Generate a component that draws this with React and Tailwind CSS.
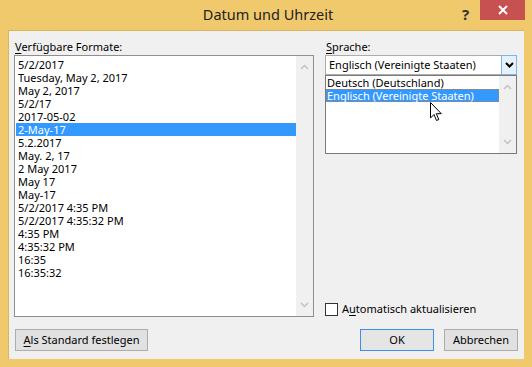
import { useState } from 'react'

const formats = [
  '5/2/2017',
  'Tuesday, May 2, 2017',
  'May 2, 2017',
  '5/2/17',
  '2017-05-02',
  '2-May-17',
  '5.2.2017',
  'May. 2, 17',
  '2 May 2017',
  'May 17',
  'May-17',
  '5/2/2017 4:35 PM',
  '5/2/2017 4:35:32 PM',
  '4:35 PM',
  '4:35:32 PM',
  '16:35',
  '16:35:32',
]

const font = { fontFamily: '"Segoe UI", "Noto Sans", sans-serif' }

function Chevron({ up, color = '#c2c2c2', bold }) {
  return (
    <svg width="9" height="6" viewBox="0 0 9 6">
      <path
        d={up ? 'M1 5 L4.5 1.5 L8 5' : 'M1 1 L4.5 4.5 L8 1'}
        fill="none"
        stroke={color}
        strokeWidth={bold ? 2 : 1.5}
      />
    </svg>
  )
}

function ScrollBar({ className = '' }) {
  return (
    <div className={`flex flex-col justify-between items-center bg-[#f0f0f0] w-[17px] py-[8px] ${className}`}>
      <Chevron up />
      <Chevron />
    </div>
  )
}

function Cursor() {
  return (
    <svg width="13" height="20" viewBox="0 0 13 20" className="absolute left-[104px] top-[26px]">
      <path
        d="M0.5 0.5 L0.5 16 L4 12.5 L6.5 18.5 L8.8 17.5 L6.3 11.7 L11.3 11.7 Z"
        fill="#fff"
        stroke="#000"
        strokeWidth="1"
      />
    </svg>
  )
}

export default function App() {
  const [selected] = useState(5)

  return (
    <div className="w-[532px] h-[367px] bg-[#f1c96d] flex flex-col text-[11px] text-black" style={font}>
      {/* Titelleiste */}
      <div className="relative h-[30px] flex items-center justify-center shrink-0">
        <span className="text-[14.5px] text-[#222] pl-[4px]">Datum und Uhrzeit</span>
        <span className="absolute left-[462px] top-[3px] text-[15px] font-bold text-[#333]">?</span>
        <div className="absolute left-[480px] top-0 w-[45px] h-[20px] bg-[#c75050] flex items-center justify-center">
          <svg width="10" height="10" viewBox="0 0 10 10">
            <path d="M1 1 L9 9 M9 1 L1 9" stroke="#fff" strokeWidth="2" />
          </svg>
        </div>
      </div>

      {/* Inhalt */}
      <div className="flex-1 mx-[8px] mb-[8px] bg-[#f0f0f0] border-t border-l border-[#d9b561] pl-[5px] pr-[6px] pt-[7px] pb-[8px] flex flex-col">
        <div className="flex gap-[11px]">
          <div className="w-[300px] flex flex-col">
            <div className="h-[17px] leading-[17px] pl-[1px]">
              <span className="underline underline-offset-2">V</span>erfügbare Formate:
            </div>
            <div className="h-[262px] border border-[#8f8f8f] bg-white flex">
              <div className="flex-1 pt-[2px] pl-[1px]">
                {formats.map((f, i) => (
                  <div
                    key={f}
                    className={`h-[13px] leading-[13px] pl-[2px] whitespace-nowrap ${
                      i === selected ? 'bg-[#3399ff] text-white' : ''
                    }`}
                  >
                    {f}
                  </div>
                ))}
              </div>
              <ScrollBar />
            </div>
          </div>

          <div className="w-[192px] flex flex-col">
            <div className="h-[17px] leading-[17px] pl-[1px]">
              <span className="underline underline-offset-2">S</span>prache:
            </div>
            <div className="relative">
              <div className="h-[20px] border border-[#acacac] bg-white flex">
                <div className="flex-1 pl-[3px] leading-[18px]">Englisch (Vereinigte Staaten)</div>
                <div className="w-[16px] bg-[#e5f1fb] border border-[#7eb4ea] -m-[1px] ml-0 flex items-center justify-center">
                  <Chevron color="#000" bold />
                </div>
              </div>
              <div className="absolute left-0 top-[20px] w-[192px] h-[79px] border border-[#7a7a7a] bg-white flex z-10">
                <div className="flex-1 relative">
                  <div className="h-[13px] leading-[13px] pl-[1px]">Deutsch (Deutschland)</div>
                  <div className="h-[13px] leading-[11px] bg-[#3399ff] text-white border border-dotted border-[#c08040] px-[0px]">
                    Englisch (Vereinigte Staaten)
                  </div>
                  <Cursor />
                </div>
                <ScrollBar className="py-[6px]" />
              </div>
            </div>
            <div className="mt-auto flex items-center gap-[4px] mb-[1px]">
              <div className="w-[13px] h-[13px] border border-[#333] bg-white" />
              <span className="leading-[14px]">
                A<span className="underline underline-offset-2">u</span>tomatisch aktualisieren
              </span>
            </div>
          </div>
        </div>

        <div className="mt-auto flex items-end">
          <button className="h-[22px] w-[133px] ml-[1px] bg-[#e1e1e1] border border-[#adadad] leading-[20px]">
            <span className="underline underline-offset-2">A</span>ls Standard festlegen
          </button>
          <div className="ml-auto flex gap-[10px]">
            <button className="h-[22px] w-[74px] bg-[#e5e5e5] border border-[#3c8ee8] leading-[20px]">OK</button>
            <button className="h-[22px] w-[74px] bg-[#e1e1e1] border border-[#adadad] leading-[20px]">Abbrechen</button>
          </div>
        </div>
      </div>
    </div>
  )
}
